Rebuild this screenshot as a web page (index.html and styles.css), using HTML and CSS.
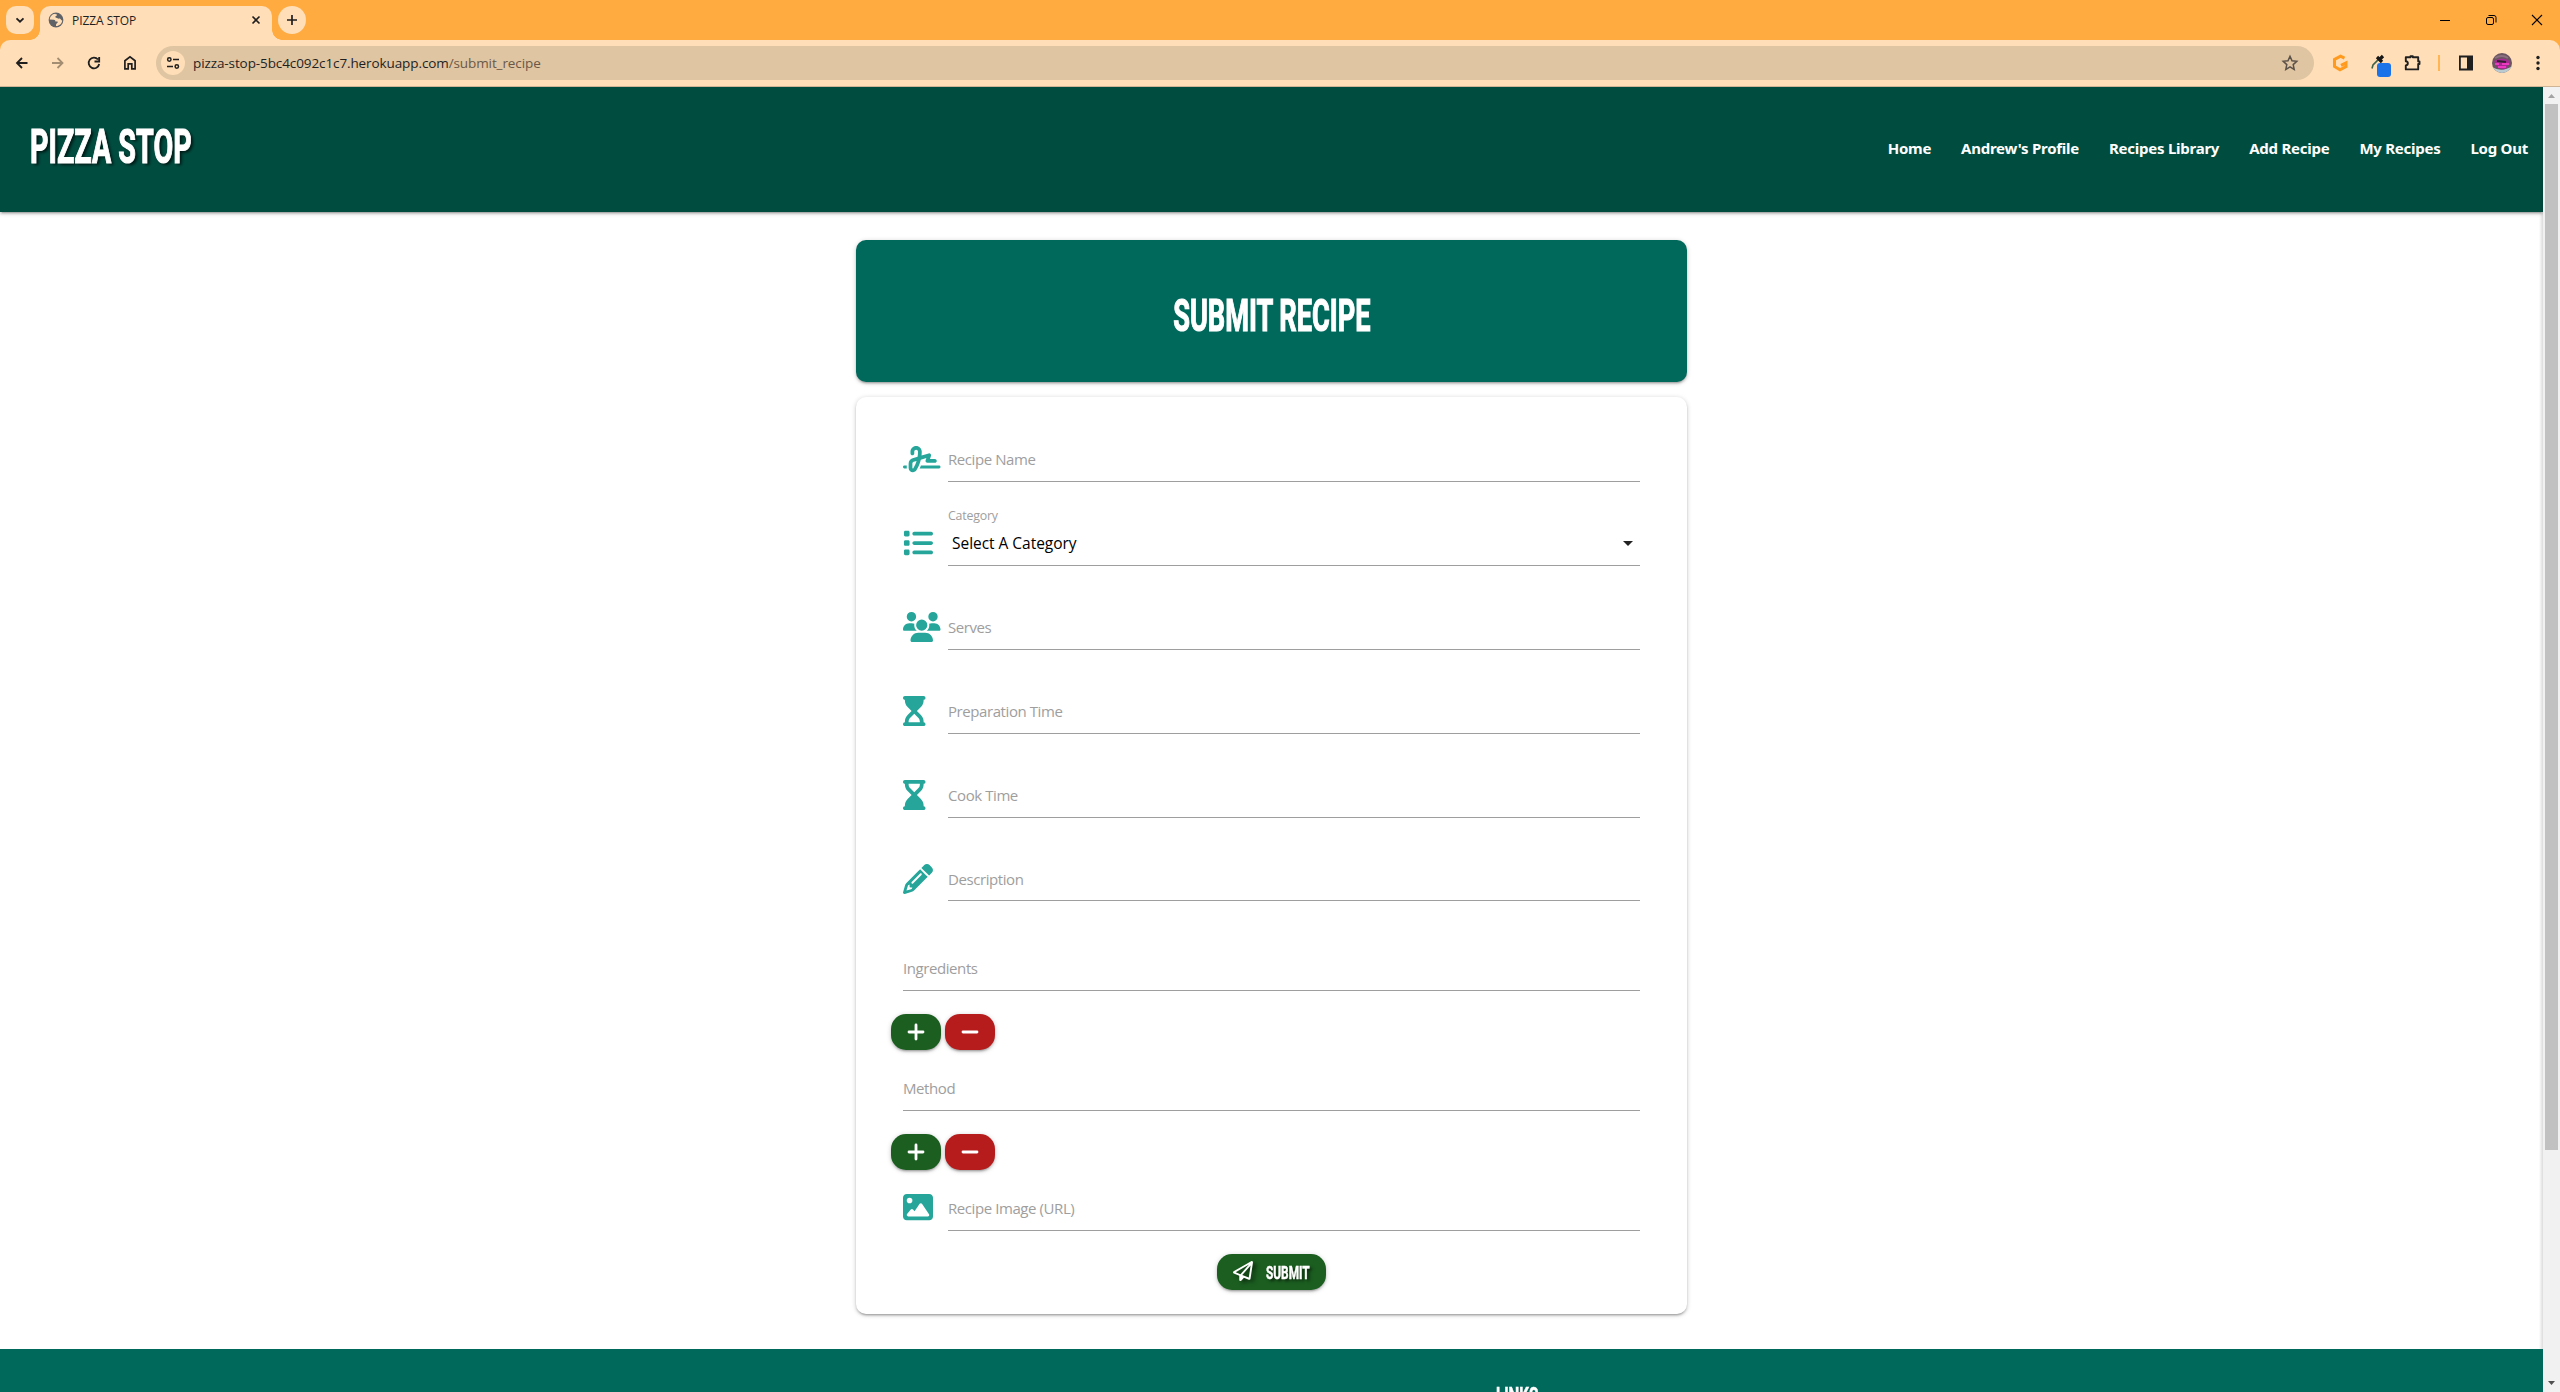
FILE: index.html
```html
<!DOCTYPE html>
<html lang="en">
<head>
<meta charset="utf-8">
<title>PIZZA STOP</title>
<link rel="stylesheet" href="styles.css">
</head>
<body>
<div class="browser">
  <div class="tabstrip">
    <div class="tab-search"><svg width="28" height="28" viewBox="0 0 28 28"><path d="M10.5 12.3l3.5 3.4 3.5-3.4" fill="none" stroke="#1f1f1f" stroke-width="1.8"/></svg></div>
    <div class="tab">
      <svg class="favicon" width="16" height="16" viewBox="0 0 16 16"><circle cx="8" cy="8" r="7.4" fill="#5f6368"/><path d="M7.2 1.8C4 2 1.8 4.8 1.8 7.6l4 .2c1.2.1 1.6.8 1.6 1.6l1.8.2c1 .2.6 1.3-.2 1.7-.9.4-1 1.3-1 2.6 3 .2 5.9-2.2 6.2-5.5-1.2-.3-1.1-1.2-2-1.7-.8-.4-2 .3-2.6-.4-.8-.9-2-.2-2.300-1.400 0-1.200 1.600-.8 1.700-1.900C9 2.200 7.900 2.600 7.200 1.800z" fill="#ffdeb8"/></svg>
      <span class="tab-title">PIZZA STOP</span>
      <svg class="tab-close" width="16" height="16" viewBox="0 0 16 16"><path d="M4.500 4.500l7 7M11.500 4.500l-7 7" stroke="#1f1f1f" stroke-width="1.600"/></svg>
    </div>
    <div class="new-tab"><svg width="28" height="28" viewBox="0 0 28 28"><path d="M14 9v10M9 14h10" stroke="#1f1f1f" stroke-width="1.700"/></svg></div>
    <div class="window-controls">
      <svg width="46" height="40" viewBox="0 0 46 40"><path d="M18 20.500h10" stroke="#000" fill="none"/></svg>
      <svg width="46" height="40" viewBox="0 0 46 40"><rect x="18.500" y="17.500" width="7" height="7" rx="1.500" stroke="#000" fill="none"/><path d="M20.500 15.500h5.500a2 2 0 0 1 2 2v5" stroke="#000" fill="none"/></svg>
      <svg width="46" height="40" viewBox="0 0 46 40"><path d="M18 15l10 10M28 15l-10 10" stroke="#000" stroke-width="1.100" fill="none"/></svg>
    </div>
  </div>
  <div class="toolbar">
    <div class="nav-buttons">
      <svg width="36" height="36" viewBox="0 0 36 36"><path d="M23.500 18H13.500M18 13l-5 5 5 5" stroke="#1f1f1f" stroke-width="1.800" fill="none"/></svg>
      <svg width="36" height="36" viewBox="0 0 36 36"><path d="M12 18h10.500M17.500 13l5 5-5 5" stroke="#a38d73" stroke-width="1.800" fill="none"/></svg>
      <svg width="36" height="36" viewBox="0 0 36 36"><path d="M22 14.500A5.300 5.300 0 1 0 23.200 19M23.200 12v4.500h-4.700" stroke="#1f1f1f" stroke-width="1.800" fill="none"/></svg>
      <svg width="36" height="36" viewBox="0 0 36 36"><path d="M12.900 23.800v-8.100L18 11.900l5.100 3.800v8.100h-3.300v-4.900h-3.600v4.900z" stroke="#1f1f1f" stroke-width="1.700" fill="none"/></svg>
    </div>
    <div class="omnibox">
      <div class="site-info"><svg width="24" height="24" viewBox="0 0 24 24" fill="none" stroke="#1f1f1f" stroke-width="1.500"><circle cx="8.300" cy="8.500" r="1.700"/><path d="M12 8.500h6M6 15.500h6"/><circle cx="15.800" cy="15.500" r="1.700"/></svg></div>
      <span class="url"><span class="host">pizza-stop-5bc4c092c1c7.herokuapp.com</span><span class="path">/submit_recipe</span></span>
      <svg class="star" width="18" height="18" viewBox="0 0 18 18"><path d="M9 2.300l2 4.500 4.800.5-3.600 3.300 1 4.800L9 12.900l-4.200 2.500 1-4.800-3.600-3.300 4.800-.5z" fill="none" stroke="#5c5148" stroke-width="1.500"/></svg>
    </div>
    <div class="extensions">
      <svg width="18" height="18" viewBox="0 0 18 18"><path d="M13.500 4.200L9.500 2.200 3.500 5.500v7l5.500 3.300 6-3.300V9l-5 2.400" fill="none" stroke="#ff9a1f" stroke-width="3"/></svg>
      <svg width="22" height="24" viewBox="0 0 22 24"><path d="M2 15.500l1-3.500 6-6 2 2" fill="none" stroke="#3c6147" stroke-width="1.600"/><path d="M7 4l5 5M9.500 6.500L13 3" stroke="#171717" stroke-width="3.200"/><rect x="7" y="10" width="14" height="14" rx="3" fill="#1a73e8"/></svg>
      <svg width="20" height="20" viewBox="0 0 20 20"><path d="M2.800 4.200h4.700v-1h2.300v1h5.400v4.200h1.300v2.600h-1.300v5.400H2.800v-4c2.700-.3 2.700-3.900 0-4.200z" fill="none" stroke="#1f1f1f" stroke-width="1.900" stroke-linejoin="round"/></svg>
      <i class="ext-separator"></i>
      <svg width="16" height="16" viewBox="0 0 16 16"><path d="M1.900 1.500h12.200v13H1.900z" fill="none" stroke="#1f1f1f" stroke-width="1.800"/><path d="M9 1h6v14H9z" fill="#1f1f1f"/></svg>
      <svg width="20" height="20" viewBox="0 0 20 20"><defs><clipPath id="avatar"><circle cx="10" cy="10" r="10"/></clipPath></defs><g clip-path="url(#avatar)"><path d="M0 0h20v20H0z" fill="#6b5560"/><path d="M0 14q10 6 20-1v7H0z" fill="#b9cbd0"/><path d="M2 8q8-5 16 0l-3 7q-5 3-10-1z" fill="#a32b91"/><path d="M3 11h4M10 11h7M6 14h8" stroke="#ed38c1" stroke-width="2"/><path d="M5 8l9 1" stroke="#33202f" stroke-width="2"/><path d="M3 5q7-4 13 0" stroke="#8c7180" stroke-width="2" fill="none"/></g></svg>
      <svg width="16" height="18" viewBox="0 0 16 18" fill="#1f1f1f"><circle cx="8" cy="3.500" r="1.700"/><circle cx="8" cy="9" r="1.700"/><circle cx="8" cy="14.500" r="1.700"/></svg>
    </div>
  </div>
</div>

<div class="viewport">
  <div class="page">
    <header class="site-header">
      <a class="brand"><span>PIZZA STOP</span></a>
      <nav class="site-nav">
        <a>Home</a><a>Andrew's Profile</a><a>Recipes Library</a><a>Add Recipe</a><a>My Recipes</a><a>Log Out</a>
      </nav>
    </header>
    <main>
      <section class="card title-card"><h1>SUBMIT RECIPE</h1></section>
      <form class="card form-card">
        <div class="field">
          <svg class="icon" viewBox="0 0 640 512"><path d="M192 128c0-17.700 14.300-32 32-32s32 14.300 32 32v7.800c0 27.700-2.400 55.300-7.100 82.500l-84.400 25.300c-40.600 12.200-68.400 49.600-68.400 92v71.900c0 40 32.500 72.500 72.500 72.500c26 0 50-13.900 62.900-36.500l13.900-24.300c26.800-47 46.500-97.700 58.400-150.500l94.400-28.300-12.500 37.500c-3.300 9.800-1.600 20.500 4.400 28.800s15.700 13.300 26 13.300H544c17.700 0 32-14.300 32-32s-14.300-32-32-32H460.400l18-53.900c3.800-11.300 .9-23.800-7.400-32.400s-20.700-11.800-32.200-8.400L316.400 198.100c2.400-20.700 3.600-41.400 3.600-62.300V128c0-53-43-96-96-96s-96 43-96 96v32c0 17.700 14.300 32 32 32s32-14.300 32-32V128zm-9.200 177l49-14.700c-10.400 33.800-24.500 66.400-42.100 97.200l-13.900 24.300c-1.500 2.600-4.300 4.300-7.400 4.300c-4.700 0-8.500-3.800-8.500-8.500V335.600c0-14.100 9.300-26.600 22.800-30.700zM24 368c-13.300 0-24 10.700-24 24s10.700 24 24 24H64.300c-.2-2.800-.3-5.600-.3-8.500V368H24zm592 48c13.300 0 24-10.700 24-24s-10.700-24-24-24H305.900c-6.700 16.300-14.200 32.300-22.300 48H616z"/></svg>
          <div class="control"><span class="label">Recipe Name</span></div>
        </div>
        <div class="field">
          <svg class="icon" viewBox="0 0 512 512"><path d="M40 48C26.700 48 16 58.700 16 72v48c0 13.300 10.700 24 24 24H88c13.300 0 24-10.700 24-24V72c0-13.300-10.700-24-24-24H40zM192 64c-17.700 0-32 14.300-32 32s14.300 32 32 32H480c17.700 0 32-14.300 32-32s-14.300-32-32-32H192zm0 160c-17.700 0-32 14.300-32 32s14.300 32 32 32H480c17.700 0 32-14.300 32-32s-14.300-32-32-32H192zm0 160c-17.700 0-32 14.300-32 32s14.300 32 32 32H480c17.700 0 32-14.300 32-32s-14.300-32-32-32H192zM16 232v48c0 13.300 10.700 24 24 24H88c13.300 0 24-10.700 24-24V232c0-13.300-10.700-24-24-24H40c-13.300 0-24 10.700-24 24zM40 368c-13.300 0-24 10.700-24 24v48c0 13.300 10.700 24 24 24H88c13.300 0 24-10.700 24-24V392c0-13.300-10.700-24-24-24H40z"/></svg>
          <div class="control select"><span class="caption">Category</span><span class="value">Select A Category</span><svg class="caret" width="10" height="5" viewBox="0 0 10 5"><path d="M0 0h10L5 5z"/></svg></div>
        </div>
        <div class="field">
          <svg class="icon" viewBox="0 0 640 512"><path d="M144 0a80 80 0 1 1 0 160A80 80 0 1 1 144 0zM512 0a80 80 0 1 1 0 160A80 80 0 1 1 512 0zM0 298.700C0 239.800 47.800 192 106.700 192h42.700c15.900 0 31 3.500 44.600 9.700c-1.300 7.200-1.900 14.700-1.900 22.300c0 38.200 16.800 72.500 43.300 96H21.300C9.600 320 0 310.400 0 298.700zM405.300 320c26.600-23.500 43.300-57.800 43.300-96c0-7.600-.7-15-1.900-22.300c13.600-6.300 28.700-9.700 44.600-9.700h42.700C592.200 192 640 239.800 640 298.700c0 11.800-9.600 21.300-21.300 21.300H405.300zM224 224a96 96 0 1 1 192 0 96 96 0 1 1 -192 0zM128 485.300C128 411.700 187.700 352 261.300 352H378.700C452.300 352 512 411.700 512 485.300c0 14.700-11.900 26.700-26.700 26.700H154.700c-14.700 0-26.700-11.900-26.700-26.700z"/></svg>
          <div class="control"><span class="label">Serves</span></div>
        </div>
        <div class="field">
          <svg class="icon" viewBox="0 0 384 512"><path fill-rule="evenodd" d="M0 32C0 14.300 14.300 0 32 0H352c17.700 0 32 14.300 32 32s-14.300 32-32 32V75c0 42.400-16.900 83.100-46.900 113.100L237.300 256l67.900 67.900c30 30 46.900 70.700 46.900 113.100v11c17.700 0 32 14.300 32 32s-14.300 32-32 32H32c-17.700 0-32-14.300-32-32s14.300-32 32-32V437c0-42.400 16.900-83.100 46.900-113.100L146.700 256 78.900 188.100C48.900 158.100 32 117.400 32 75V64C14.300 64 0 49.700 0 32zM96 448H288V437c0-25.500-10.100-49.900-28.100-67.900L192 301.300l-67.900 67.900c-18 18-28.100 42.400-28.100 67.900z"/></svg>
          <div class="control"><span class="label">Preparation Time</span></div>
        </div>
        <div class="field">
          <svg class="icon" viewBox="0 0 384 512"><path fill-rule="evenodd" d="M0 32C0 14.300 14.300 0 32 0H352c17.700 0 32 14.300 32 32s-14.300 32-32 32V75c0 42.400-16.900 83.100-46.900 113.100L237.300 256l67.900 67.900c30 30 46.900 70.700 46.900 113.100v11c17.700 0 32 14.300 32 32s-14.300 32-32 32H32c-17.700 0-32-14.300-32-32s14.300-32 32-32V437c0-42.400 16.900-83.100 46.900-113.100L146.700 256 78.900 188.100C48.900 158.100 32 117.400 32 75V64C14.300 64 0 49.700 0 32zM96 64V75c0 25.500 10.100 49.900 28.100 67.900L192 210.700l67.900-67.900c18-18 28.100-42.400 28.100-67.900V64z"/></svg>
          <div class="control"><span class="label">Cook Time</span></div>
        </div>
        <div class="field description">
          <svg class="icon" viewBox="0 0 512 512"><path d="M410.300 231l11.300-11.300-33.900-33.900-62.100-62.100L291.700 89.800l-11.300 11.300-22.600 22.600L58.600 322.900c-10.400 10.400-18 23.300-22.200 37.400L1 480.700c-2.500 8.400-.2 17.500 6.100 23.700s15.300 8.500 23.700 6.100l120.300-35.400c14.100-4.200 27-11.800 37.400-22.200L387.700 253.700 410.300 231zM160 399.400l-9.100 22.700c-4 3.100-8.500 5.400-13.300 6.900L59.400 452l23-78.100c1.400-4.900 3.800-9.400 6.900-13.300l22.700-9.100v32c0 8.800 7.200 16 16 16h32zM362.700 18.700L348.300 33.200 325.700 55.800 314.300 67.100l33.900 33.900 62.100 62.100 33.900 33.900 11.300-11.300 22.600-22.600 14.500-14.500c25-25 25-65.500 0-90.500L453.300 18.700c-25-25-65.500-25-90.500 0zm-47.400 168l-144 144c-6.200 6.200-16.400 6.200-22.600 0s-6.200-16.400 0-22.600l144-144c6.200-6.200 16.400-6.200 22.600 0s6.200 16.400 0 22.600z"/></svg>
          <div class="control"><span class="label">Description</span></div>
        </div>
        <div class="field wide">
          <div class="control"><span class="label">Ingredients</span></div>
        </div>
        <div class="row-buttons">
          <button type="button" class="btn add"><svg width="18" height="18" viewBox="0 0 18 18"><path d="M9 2v14M2 9h14"/></svg></button>
          <button type="button" class="btn remove"><svg width="18" height="18" viewBox="0 0 18 18"><path d="M2 9h14"/></svg></button>
        </div>
        <div class="field wide">
          <div class="control"><span class="label">Method</span></div>
        </div>
        <div class="row-buttons">
          <button type="button" class="btn add"><svg width="18" height="18" viewBox="0 0 18 18"><path d="M9 2v14M2 9h14"/></svg></button>
          <button type="button" class="btn remove"><svg width="18" height="18" viewBox="0 0 18 18"><path d="M2 9h14"/></svg></button>
        </div>
        <div class="field image">
          <svg class="icon" viewBox="0 0 512 512"><path d="M0 96C0 60.700 28.700 32 64 32H448c35.300 0 64 28.700 64 64V416c0 35.300-28.700 64-64 64H64c-35.300 0-64-28.700-64-64V96zM323.800 202.500c-4.500-6.600-11.900-10.500-19.800-10.500s-15.400 3.900-19.800 10.500l-87 127.600L170.700 297c-4.600-5.700-11.500-9-18.700-9s-14.200 3.300-18.700 9l-64 80c-5.800 7.200-6.900 17.100-2.900 25.400s12.400 13.600 21.600 13.600H424c8.900 0 17.100-4.900 21.200-12.800s3.600-17.400-1.400-24.700l-120-176zM112 192a48 48 0 1 0 0-96 48 48 0 1 0 0 96z"/></svg>
          <div class="control"><span class="label">Recipe Image (URL)</span></div>
        </div>
        <button type="button" class="btn submit">
          <svg width="20" height="20" viewBox="0 0 512 512"><path d="M16.100 260.200c-22.600 12.900-20.500 47.300 3.600 57.300L160 376V479.300c0 18.100 14.600 32.700 32.700 32.700c9.700 0 18.900-4.300 25.100-11.800l62-74.300 123.900 51.600c18.900 7.900 40.800-4.500 43.900-24.700l64-416c1.900-12.100-3.400-24.300-13.500-31.200s-23.300-7.500-34-1.400l-448 256zm52.100 25.500L409.700 90.600 190.100 336l1.200 1L68.200 285.700zM403.300 425.400L236.700 355.900 450.800 116.600 403.300 425.400z"/></svg>
          <span>SUBMIT</span>
        </button>
      </form>
    </main>
    <footer><h2>LINKS</h2></footer>
  </div>
  <div class="scrollbar">
    <svg width="17" height="17" viewBox="0 0 17 17"><path d="M5 11h7L8.500 7z" fill="#a3a3a3"/></svg>
    <div class="thumb"></div>
    <svg width="17" height="17" viewBox="0 0 17 17"><path d="M5 6h7l-3.500 4z" fill="#505050"/></svg>
  </div>
</div>
</body>
</html>
```
FILE: styles.css
```css
* { box-sizing: border-box; }
body {
  margin: 0;
  width: 2560px;
  height: 1392px;
  overflow: hidden;
  background: #fff;
  font-family: "Open Sans", "Noto Sans", sans-serif;
}
svg { display: block; flex: none; }

/* browser frame */
.browser { background: #ffab40; height: 87px; }
.tabstrip { display: flex; height: 40px; padding-left: 6px; }
.tab-search {
  width: 28px; height: 28px; margin-top: 6px;
  border-radius: 10px; background: #ffdeb8;
}
.tab {
  position: relative;
  display: flex; align-items: center;
  width: 232px; height: 34px; margin: 6px 6px 0;
  padding: 0 8px 6px;
  border-radius: 10px 10px 0 0;
  background: #ffdeb8;
}
.tab::before, .tab::after {
  content: "";
  position: absolute; bottom: 0;
  width: 10px; height: 10px;
}
.tab::before { left: -10px; background: radial-gradient(circle at 0 0, transparent 9.500px, #ffdeb8 10px); }
.tab::after { right: -10px; background: radial-gradient(circle at 100% 0, transparent 9.500px, #ffdeb8 10px); }
.tab-title { margin-left: 8px; padding-top: 1px; font-size: 12px; line-height: 16px; letter-spacing: -.05px; color: #1f1f1f; }
.tab-close { margin-left: auto; }
.new-tab { width: 28px; height: 28px; margin-top: 6px; border-radius: 50%; background: #ffdeb8; }
.window-controls { display: flex; margin-left: auto; }
.toolbar {
  display: flex; align-items: center;
  height: 47px; padding: 0 0 1px 4px;
  background: #ffdeb8;
  border-bottom: 1px solid #cfb595;
  border-radius: 10px 10px 0 0;
}
.nav-buttons { display: flex; width: 152px; }
.omnibox {
  display: flex; align-items: center;
  width: 2158px; height: 34px; padding: 0 15px 0 5px;
  border-radius: 17px; background: #dfc5a2;
}
.site-info { width: 24px; height: 24px; border-radius: 50%; background: #ffdeb8; }
.url { margin-left: 8px; font-size: 13.500px; letter-spacing: -.1px; color: #1f1f1f; white-space: nowrap; }
.path { color: #6b5846; }
.star { margin-left: auto; }
.extensions { display: flex; align-items: center; margin-left: 17px; }
.extensions svg:nth-child(2) { margin: 4px 0 0 21px; }
.extensions svg:nth-child(3) { margin-left: 11px; }
.ext-separator { width: 2px; height: 16px; margin: 0 18px 0 15px; background: #ffb554; }
.extensions svg:nth-child(6) { margin-left: 18px; }
.extensions svg:nth-child(7) { margin-left: 18px; }

/* page */
.viewport { display: flex; height: 1305px; }
.page { position: relative; width: 2543px; height: 1305px; overflow: hidden; }
.page::after {
  content: "";
  position: absolute; right: 0; top: 0;
  width: 4px; height: 1262px;
  background: linear-gradient(90deg, rgba(0,0,0,0), rgba(0,0,0,.14));
}
.site-header {
  display: flex; align-items: center; justify-content: space-between;
  height: 125px; padding: 0 15px 0 30px;
  background: #004d40; color: #fff;
  box-shadow: 0 2px 2px 0 rgba(0,0,0,.14), 0 3px 1px -2px rgba(0,0,0,.12), 0 1px 5px 0 rgba(0,0,0,.2);
}
.brand, h1, h2, .submit span { font-family: Roboto, "Liberation Sans", sans-serif; font-weight: 700; white-space: nowrap; -webkit-text-stroke: 1.200px #fff; }
.brand { width: 164px; font-size: 48px; line-height: 60px; margin-top: -5px; }
.brand span { display: inline-block; transform: scaleX(.598); transform-origin: left; text-shadow: 4px 2px 4px rgba(0,0,0,.7); }
.site-nav { display: flex; gap: 30px; font-family: "Noto Sans", sans-serif; font-weight: 700; font-size: 15px; line-height: 20px; margin-top: -3px; letter-spacing: -.250px; }
.card {
  width: 831px; margin: 0 auto; border-radius: 10px; background: #fff;
  box-shadow: 0 2px 2px 0 rgba(0,0,0,.14), 0 3px 1px -2px rgba(0,0,0,.12), 0 1px 5px 0 rgba(0,0,0,.2);
}
.title-card {
  display: flex; align-items: center; justify-content: center;
  height: 142px; margin-top: 28px; background: #00695c; color: #fff;
}
h1 { margin: 10px 0 0; font-size: 44px; line-height: 52px; transform: scaleX(.617); }
.form-card {
  display: flex; flex-direction: column; align-items: stretch;
  height: 917px; margin-top: 15px; padding: 40px 47px 0 47px;
}
.field { display: grid; grid-template-columns: 45px 1fr; height: 45px; margin-bottom: 39px; }
.field.description { height: 44px; margin-bottom: 45px; }
.field.wide { grid-template-columns: 1fr; margin-bottom: 23px; }
.field.image { margin-bottom: 23px; }
.icon { height: 30px; margin-top: 7px; fill: #26a69a; }
.image .icon { margin-top: 6px; }
.control { position: relative; display: flex; padding-top: 12px; border-bottom: 1px solid #9e9e9e; font-size: 15.500px; line-height: 22px; }
.label { margin-top: -1px; font-size: 15px; color: #9e9e9e; letter-spacing: -.420px; }
.caption { position: absolute; left: 0; top: -14px; font-size: 12.400px; line-height: 18px; color: #9e9e9e; letter-spacing: -.220px; }
.value { margin-top: -1px; padding-left: 4px; color: #000; letter-spacing: -.030px; }
.caret { margin: 8px 7px 0 auto; fill: #222; }
.row-buttons { display: flex; gap: 4px; margin: 0 0 16px -12px; }
.btn {
  display: flex; align-items: center; justify-content: center;
  width: 50px; height: 36px; padding: 0; border: 0; border-radius: 15px; color: #fff;
  box-shadow: 0 2px 2px 0 rgba(0,0,0,.14), 0 3px 1px -2px rgba(0,0,0,.12), 0 1px 5px 0 rgba(0,0,0,.2);
}
.add svg, .remove svg { stroke: #fff; stroke-width: 2.800; stroke-linecap: round; }
.add, .submit { background: #1b5e20; }
.remove { background: #b71c1c; }
.submit { width: 109px; margin-left: 314px; padding-left: 16px; justify-content: flex-start; }
.submit svg { margin-top: -2px; fill: #fff; overflow: visible; filter: drop-shadow(3px 2px 2px rgba(0,0,0,.6)); }
.submit span { margin: 2px 0 0 13px; font-size: 18.500px; -webkit-text-stroke-width: .500px; transform: scaleX(.64); transform-origin: left; text-shadow: 4px 2px 4px rgba(0,0,0,.7); }
footer { height: 43px; margin-top: 35px; padding: 35px 0 0 1496px; overflow: hidden; background: #00695c; color: #fff; }
h2 { margin: 0; font-size: 24px; line-height: 24px; -webkit-text-stroke-width: .600px; transform: scaleX(.63); transform-origin: left; }

.scrollbar { display: flex; flex-direction: column; width: 17px; background: #f1f1f1; }
.thumb { width: 13px; height: 1046px; margin: 0 auto auto 2px; background: #c1c1c1; }
```
